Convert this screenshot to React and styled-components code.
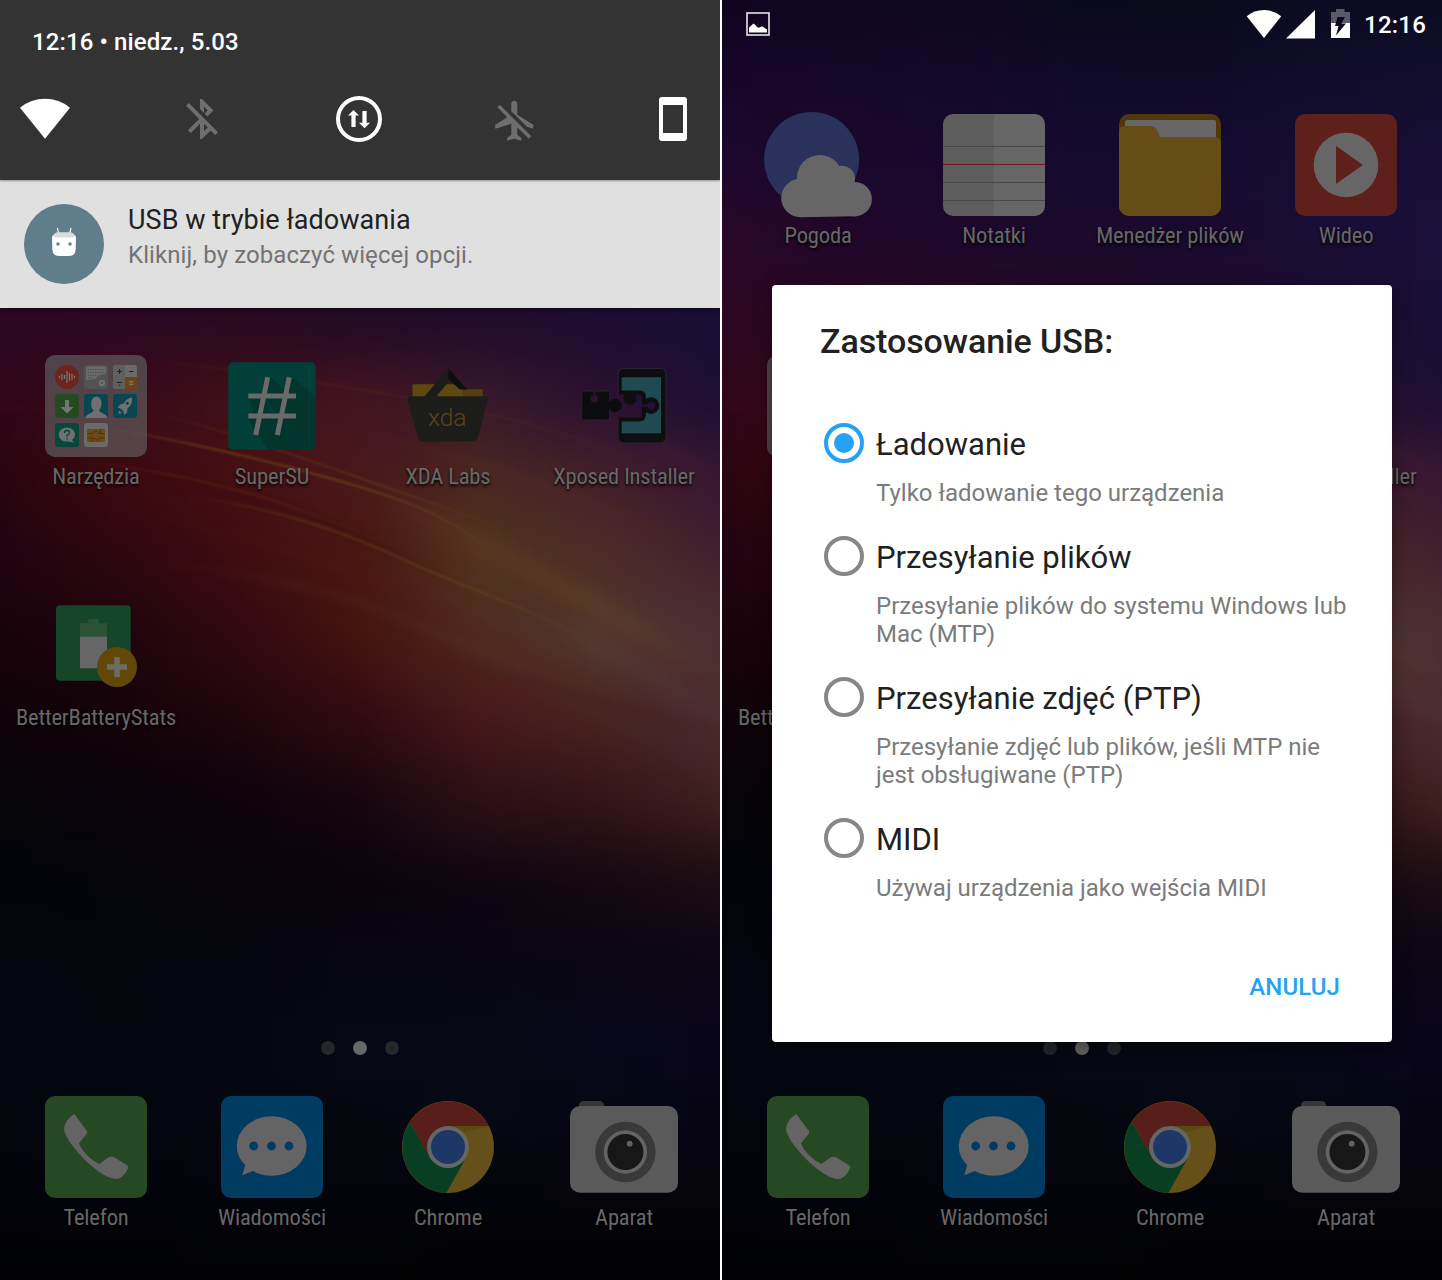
import React from 'react';
import styled, { createGlobalStyle } from 'styled-components';

const GlobalStyle = createGlobalStyle`
  body { margin: 0; background: #fff; font-family: Roboto, "Noto Sans", sans-serif; }
  svg { display: block; flex: none; }
`;

/* ---------- wallpaper ---------- */

const ROWS = [
  '110420 100620 0d0820 0a091a 0a0a1a 0b0b20 0c0b22',
  '170528 150728 130828 0f0a28 0f0a26 100c2a 110d2c',
  '1c072e 1a082d 18082e 150a30 140b30 160e34 170e36',
  '2a0726 20072a 1e082c 1b0a2c 1a0a2c 190d35 1a0f38',
  '2b0722 2b0822 28091f 220a24 200b2a 1c0c30 180e36',
  '300619 380a1a 420f18 431420 38182a 2a1030 1c0e34',
  '28040f 3c090f 460f12 4a181a 4a2820 44202a 381630',
  '200310 2c060f 400c10 4a1612 52341f 4f2c26 44202e',
  '180309 1e040c 300810 44130f 4e2a20 533830 4c3034',
  '0e0309 140309 1f050c 300a10 46181a 482420 4a2a30',
  '050409 08030a 0e030c 16050e 2c1015 341418 40201f',
  '02040a 04040a 08040b 0a040e 0e0510 140810 1c0c12',
  '03060e 03050d 05050f 070612 080612 0a0614 0c0616',
  '030610 04060f 040710 060816 060816 08071a 09051a',
  '03050d 03060f 04070f 05070f 060812 060714 070514',
  '020309 02030a 03040a 03040a 030409 040409 040409',
  '010102 010103 020203 020203 010102 010102 010102',
].map((r) => r.split(' '));

const STREAKS = [
  { d: 'M147 412 C200 422 280 450 360 478 S470 515 520 537', c: '#6b4a14', w: 1.6, o: 0.6, b: 'f', fade: true },
  { d: 'M90 425 C180 440 270 460 360 487 S460 530 510 562', c: '#7a5a16', w: 1.8, o: 0.75, b: 'f', fade: true },
  { d: 'M180 495 C260 505 330 525 400 558 S540 610 620 656', c: '#6e4c1c', w: 2.4, o: 0.55, b: 'f', fade: true },
  { d: 'M120 560 C240 570 330 588 400 618 S600 695 720 735', c: '#5f3422', w: 4, o: 0.45, b: 'm', fade: true },
  { d: 'M60 460 C150 466 240 488 300 510 S380 540 440 565', c: '#6b2c14', w: 1.8, o: 0.5, b: 'f', fade: true },
  { d: 'M100 355 C200 365 300 378 420 400 S600 445 700 480', c: '#5a2c1c', w: 2.4, o: 0.4, b: 'f', fade: true },
  { d: 'M330 430 C430 445 560 480 720 560', c: '#5c3020', w: 6, o: 0.35, b: 'm', fade: true },
  { d: 'M0 405 C140 420 300 460 420 520 S620 640 720 690', c: '#661818', w: 4, o: 0.22, b: 'm' },
  { d: 'M60 500 C200 520 340 560 460 620 S660 710 720 760', c: '#5c1c12', w: 5, o: 0.3, b: 'm', fade: true },
  { d: 'M200 590 C360 610 500 680 720 800', c: '#54160f', w: 8, o: 0.25, b: 'm', fade: true },
  { d: 'M360 490 C460 530 580 595 740 690', c: '#6a4c26', w: 20, o: 0.4, b: 'l', fade: true },
  { d: 'M520 605 C590 640 660 680 760 735', c: '#65483e', w: 12, o: 0.35, b: 'l' , fade: true },
  { d: 'M440 660 C560 690 640 710 740 740', c: '#3c1414', w: 6, o: 0.3, b: 'm', fade: true },
  { d: 'M560 400 C620 425 680 455 740 485', c: '#4a1c3c', w: 10, o: 0.3, b: 'm', fade: true },
  { d: 'M360 730 C480 730 620 770 720 840', c: '#40120f', w: 16, o: 0.3, b: 'l', fade: true },
  { d: 'M150 480 C300 500 400 550 480 600', c: '#240508', w: 6, o: 0.3, b: 'm', fade: true },
];

const WallpaperSvg = styled.svg`
  position: absolute;
  inset: 0;
`;

const Wallpaper = ({ id }) => (
  <WallpaperSvg width="720" height="1280" viewBox="0 0 720 1280">
    <defs>
      {ROWS.map((stops, i) => (
        <linearGradient id={`${id}-r${i}`} key={i} gradientUnits="userSpaceOnUse" x1="0" x2="720" y1="0" y2="0">
          {stops.map((c, j) => (
            <stop key={j} offset={j / 6} stopColor={`#${c}`} />
          ))}
        </linearGradient>
      ))}
      {STREAKS.map((s, i) => s.fade && (
        <linearGradient id={`${id}-s${i}`} key={i}>
          <stop offset="0" stopColor={s.c} stopOpacity="0" />
          <stop offset=".3" stopColor={s.c} stopOpacity=".8" />
          <stop offset=".6" stopColor={s.c} />
          <stop offset="1" stopColor={s.c} stopOpacity="0" />
        </linearGradient>
      ))}
      <filter id={`${id}-mesh`} filterUnits="userSpaceOnUse" x="-100" y="-100" width="920" height="1480" colorInterpolationFilters="sRGB">
        <feGaussianBlur stdDeviation="6 30" />
      </filter>
      {[['f', 0.8], ['m', 4], ['l', 10]].map(([k, s]) => (
        <filter key={k} id={`${id}-${k}`} filterUnits="userSpaceOnUse" x="0" y="250" width="720" height="700" colorInterpolationFilters="sRGB">
          <feGaussianBlur stdDeviation={s} />
        </filter>
      ))}
    </defs>
    <g filter={`url(#${id}-mesh)`}>
      {ROWS.map((_, i) => (
        <rect
          key={i}
          x="-100"
          width="920"
          y={i === 0 ? -140 : i * 80 - 40}
          height={i === 0 || i === 16 ? 180 : 80.5}
          fill={`url(#${id}-r${i})`}
        />
      ))}
    </g>
    {STREAKS.map((s, i) => (
      <path
        key={i}
        d={s.d}
        fill="none"
        stroke={s.fade ? `url(#${id}-s${i})` : s.c}
        strokeWidth={s.w}
        opacity={s.o}
        filter={`url(#${id}-${s.b})`}
      />
    ))}
  </WallpaperSvg>
);

/* ---------- launcher icons, drawn in a 108 x 108 box ---------- */

const IconBox = ({ children }) => (
  <svg width="108" height="108" viewBox="0 0 108 108">{children}</svg>
);

const Weather = () => (
  <IconBox>
    <circle cx="47.6" cy="48.5" r="47.5" fill="#2a325c" />
    <g fill="#666">
      <circle cx="55.7" cy="66.6" r="22.7" />
      <circle cx="78" cy="67.7" r="13" />
      <circle cx="36.4" cy="87" r="19.2" />
      <circle cx="90.7" cy="88.2" r="17.2" />
      <path d="M34 70 L80 62 L91 72 V105.3 L37 106.2 Z" />
    </g>
  </IconBox>
);

const Notes = () => (
  <IconBox>
    <path d="M13 3H54V105H13A10 10 0 0 1 3 95V13A10 10 0 0 1 13 3Z" fill="#5e5e5e" />
    <path d="M54 3H95A10 10 0 0 1 105 13V95A10 10 0 0 1 95 105H54Z" fill="#666" />
    <path d="M3 35.5H105M3 71.5H105M3 89.5H105" stroke="#484848" />
    <path d="M3 53.5H105" stroke="#6c1a22" />
  </IconBox>
);

const Files = () => (
  <IconBox>
    <rect x="3" y="3" width="102" height="102" rx="10" fill="#503909" />
    <rect x="9" y="9" width="91" height="30" rx="2" fill="#666" />
    <path d="M3 21Q3 15 9 15H33Q39 15 41 19L44 26H98Q105 26 105 33V95A10 10 0 0 1 95 105H13A10 10 0 0 1 3 95Z" fill="#664d17" />
  </IconBox>
);

const Video = () => (
  <IconBox>
    <rect x="3" y="3" width="102" height="102" rx="10" fill="#5e201b" />
    <circle cx="54" cy="54" r="32.3" fill="#666" />
    <path d="M44 34.7L70.8 54L44 73Z" fill="#5e201b" />
  </IconBox>
);

const Tools = () => (
  <IconBox>
    <rect x="3" y="3" width="102" height="102" rx="10" fill="rgba(102,102,102,.62)" />
    <circle cx="25" cy="25" r="12" fill="#6b241e" />
    <path d="M17.5 23.8V26.2M20 22V28M22.5 23V27M25 19V31M27.5 21V29M30 22V28M32.5 23.8V26.2" stroke="#777" strokeWidth="1.2" />
    <rect x="42" y="13" width="24" height="24" rx="3" fill="#535353" />
    <path d="M44 17Q44 14.5 46.5 14.5H62Q64 14.5 64 17V22Q57 22 54 26Q52 28 44 28Z" fill="#6a6a6a" />
    <path d="M46 17.5H63M46 20.5H63M46 23.5H55M46 26H51" stroke="#4b4b4b" strokeWidth="1" strokeDasharray="1.2 1.2" />
    <circle cx="60" cy="31" r="3.2" fill="#707070" />
    <circle cx="60" cy="31" r=".8" fill="#6b241e" />
    <rect x="71" y="13" width="24" height="24" rx="3" fill="#6a6a6a" />
    <path d="M74 13H83V37H74A3 3 0 0 1 71 34V16A3 3 0 0 1 74 13Z" fill="#5f5f5f" />
    <path d="M83 25H95V34A3 3 0 0 1 92 37H83Z" fill="#6b4514" />
    <path d="M75 19.5H80M77.5 17V22M87 19.5H91.5M75 30.5H80" stroke="#222" strokeWidth="1.1" />
    <path d="M77.5 32.5V33.8" stroke="#222" strokeWidth="1.2" />
    <path d="M87 29.8H91.5M87 32.2H91.5" stroke="#888" strokeWidth="1" />
    <rect x="13" y="42" width="24" height="24" rx="3" fill="#254a22" />
    <path d="M23 48H27V55H31.5L25 61.5L18.5 55H23Z" fill="#747474" />
    <rect x="42" y="42" width="24" height="24" rx="3" fill="#084652" />
    <path d="M43 66C44 62 51 61 51.5 58.5C48 55 48 45 54.5 44.5C61 45 60.5 55 57 58.5C58 61 65 62 65.5 66Z" fill="#6f6f6f" />
    <rect x="71" y="42" width="24" height="24" rx="3" fill="#084652" />
    <path d="M90 45.5Q91 52 85.5 56.5L85 60.5L82 63L81.5 59L78.5 56.5L75.5 55.5L78 52.5L81.5 51.5Q85 46 90 45.5ZM77 58.5L80 61L76.5 62Z" fill="#707070" />
    <circle cx="85.3" cy="51.3" r="1.5" fill="#084652" />
    <rect x="13" y="71" width="24" height="24" rx="3" fill="#06493b" />
    <path d="M25 75.5C29.5 75.5 33 78.6 33 82.5C33 85 31.5 87 30 88L32 90.5L27 89.4C21 90.5 16.8 87 16.8 82.5C16.8 78.6 20.5 75.5 25 75.5Z" fill="#6f6f6f" />
    <path d="M22.5 81Q22.5 78.5 25 78.5Q27.5 78.5 27.5 80.7Q27.5 82.2 25 83.5V85M25 86V87.5" fill="none" stroke="#06493b" strokeWidth="1.3" />
    <rect x="42" y="71" width="24" height="24" rx="3" fill="#6c6a68" />
    <rect x="45" y="77" width="18" height="13" rx="1.5" fill="#6b4a14" />
    <path d="M45 81.5H51L53 79.5H55L57 81.5H63M45 86H52L54 88H56L57 86H63M50 86V90M58.5 77V81.5" fill="none" stroke="#473009" strokeWidth=".8" />
  </IconBox>
);

const SuperSU = () => (
  <IconBox>
    <rect x="10.2" y="10.2" width="87.6" height="87.6" rx="5" fill="#013f38" />
    <path d="M53 25L71 43L60 64L44 41ZM74 25L97.5 45V92.5Q97.5 97.5 92.5 97.5H50L30 68L38 65L30 44L46 46L56 64L62 45Z" fill="#013029" opacity=".65" />
    <path d="M30.3 44H78M30.3 64H78M49.7 25.3L37.7 83M71.3 25.3L59.3 83" stroke="#6a6a6a" strokeWidth="5" />
  </IconBox>
);

const XdaText = styled.text`
  font: 300 24px Roboto, sans-serif;
  fill: #5c4414;
`;

const XdaLabs = () => (
  <IconBox>
    <rect x="18.5" y="32.3" width="50.5" height="14" rx="1" fill="#5f4810" />
    <rect x="69" y="37.3" width="19.7" height="9" rx="1" fill="#523e10" />
    <path d="M54.3 16.3L73 37.5H66L54 27Z" fill="#0e0e0e" />
    <path d="M54.3 16.3V30L42 45H30Z" fill="#1b1b1b" />
    <path d="M13.7 48Q13.3 44.3 17 44.3H90.5Q94.5 44.3 93.7 48L84.5 84Q83 89.5 78 89.5H30Q25 89.5 23.5 84Z" fill="#1c1c1b" />
    <XdaText x="34" y="74" textLength="38.5" lengthAdjust="spacingAndGlyphs">xda</XdaText>
  </IconBox>
);

const Xposed = () => {
  const id = React.useId();
  return (
    <IconBox>
      <mask id={id} maskUnits="userSpaceOnUse" x="0" y="0" width="108" height="108">
        <rect width="108" height="108" fill="#fff" />
        <path d="M44 42.4H69Q72 42.4 72 45V52.4H77.500A4 4 0 1 1 77.500 54.800H72V62Q72 65.600 69 65.600H44Z" fill="#000" />
        <circle cx="60" cy="46" r="6.7" fill="#fff" />
        <rect x="55" y="38" width="10" height="6" fill="#fff" />
        <circle cx="24.3" cy="46.8" r="3.7" fill="#000" />
        <path d="M24.3 37V46" stroke="#000" strokeWidth="2" />
      </mask>
      <g mask={`url(#${id})`}>
        <rect x="48" y="16.5" width="48" height="74.5" rx="5" fill="#0e0e10" stroke="#2a2430" strokeWidth="1.2" />
        <rect x="51.7" y="25.3" width="39.3" height="56" fill="#204a52" />
        <path d="M50 40.5H69Q74 40.5 74 45V62Q74 67.5 69 67.5H50" fill="#0e0e10" stroke="#0e0e10" strokeWidth="3.8" />
        <circle cx="81" cy="53.6" r="8.3" fill="#0e0e10" />
        <rect x="11.7" y="39" width="28" height="29" rx="2" fill="#0c0c0e" stroke="#2a2430" strokeWidth="1" />
      </g>
      <circle cx="45" cy="53.3" r="6.6" fill="#0c0c0e" />
      <path d="M38 53.3H47" stroke="#0c0c0e" strokeWidth="6" />
    </IconBox>
  );
};

const BatteryStats = () => (
  <IconBox>
    <rect x="14" y="12.3" width="74.7" height="75.5" rx="4" fill="#16462a" />
    <path d="M46.3 26H56.7V30.3H65V44H38V30.3H46.3Z" fill="#2c5235" />
    <rect x="38" y="43.7" width="27" height="31.6" fill="#666" />
    <circle cx="75" cy="74" r="20" fill="#624808" />
    <path d="M65 74H85M75 64V84" stroke="#6e6b62" strokeWidth="5.6" />
  </IconBox>
);

const Phone = () => (
  <IconBox>
    <rect x="3" y="3" width="102" height="102" rx="10" fill="#264924" />
    <path d="M32.3 21L45 38.3Q45.6 39.5 44.6 41L37 50.3Q40 58 46.5 63.5Q52 69 57.5 71L65.5 65Q69.5 62.8 72.5 64.5L85 72.3Q86.8 73.5 85.5 76.5Q81 85.5 74.5 86Q63 86 43 67Q22 45.5 22 35Q23.5 26.5 32.3 21Z" fill="#646464" />
  </IconBox>
);

const Messages = () => (
  <IconBox>
    <rect x="3" y="3" width="102" height="102" rx="10" fill="#003b62" />
    <ellipse cx="53.7" cy="53" rx="35" ry="29.7" fill="#646464" />
    <path d="M27.7 70L24.3 82.3L36 77.5Z" fill="#646464" />
    <g fill="#003b62">
      <circle cx="35.7" cy="53" r="4.4" />
      <circle cx="53.5" cy="53" r="4.4" />
      <circle cx="71" cy="53" r="4.4" />
    </g>
  </IconBox>
);

const Chrome = () => (
  <IconBox>
    <circle cx="54" cy="54" r="46" fill="#65501a" />
    <path d="M54 33H94.7L70 39Z" fill="#55420f" opacity=".6" />
    <path d="M15.8 29A46 46 0 0 0 52.3 100L72.2 64.5L54 54L36 64Z" fill="#083f23" />
    <path d="M15.8 29A46 46 0 0 1 94.7 33H54V54L36 64Z" fill="#571e1a" />
    <circle cx="54" cy="54" r="21" fill="#666" />
    <circle cx="54" cy="54" r="17" fill="#1d3867" />
  </IconBox>
);

const Camera = () => (
  <IconBox>
    <path d="M9 15V13Q9 8 14 8H29Q34 8 34 13V15Z" fill="#343637" />
    <rect x="0" y="13" width="108" height="86.7" rx="10" fill="#5a5a5a" />
    <circle cx="55.4" cy="59" r="30.2" fill="#37393a" />
    <circle cx="55.4" cy="59" r="21.7" fill="#636363" />
    <circle cx="55.4" cy="59" r="18" fill="#171717" />
    <circle cx="59.7" cy="50.7" r="2.9" fill="#626262" />
  </IconBox>
);

/* ---------- home screen ---------- */

const Page = styled.main`
  display: flex;
  gap: 2px;
  width: 1442px;
  height: 1280px;
  overflow: hidden;
  background: #fff;
`;

const PhoneScreen = styled.section`
  position: relative;
  width: 720px;
  height: 1280px;
  overflow: hidden;
  background: #05060c;
`;

const Home = styled.div`
  position: relative;
  padding: 111px 8px 0;
  display: flex;
  flex-direction: column;
`;

const AppGrid = styled.div`
  display: grid;
  grid-template-columns: repeat(4, 176px);
  grid-auto-rows: ${(p) => p.$row}px;
`;

const AppCell = styled.div`
  display: flex;
  flex-direction: column;
  align-items: center;
`;

const AppLabel = styled.span`
  margin-top: 3px;
  font-size: 22.5px;
  line-height: 26px;
  font-weight: 450;
  font-stretch: 75%;
  letter-spacing: -0.15px;
  white-space: nowrap;
  color: #686868;
  text-shadow: 0 2px 3px #000;
`;

const Dots = styled.div`
  display: flex;
  justify-content: center;
  gap: 18px;
  margin: 207px 0 38px;
`;

const Dot = styled.i`
  width: 14px;
  height: 14px;
  border-radius: 50%;
  background: ${(p) => (p.$active ? '#676767' : '#26272d')};
`;

const APPS = [
  ['Pogoda', Weather],
  ['Notatki', Notes],
  ['Menedżer plików', Files],
  ['Wideo', Video],
  ['Narzędzia', Tools],
  ['SuperSU', SuperSU],
  ['XDA Labs', XdaLabs],
  ['Xposed Installer', Xposed],
  ['BetterBatteryStats', BatteryStats],
];

const DOCK = [
  ['Telefon', Phone],
  ['Wiadomości', Messages],
  ['Chrome', Chrome],
  ['Aparat', Camera],
];

const AppItem = ({ name, Icon, unlabeled }) => (
  <AppCell>
    <Icon />
    {!unlabeled && <AppLabel>{name}</AppLabel>}
  </AppCell>
);

/* Labels that sit fully under a panel are not rendered. */
const HomeScreen = ({ covered = [] }) => (
  <Home>
    <AppGrid $row={241}>
      {APPS.map(([name, Icon]) => (
        <AppItem key={name} name={name} Icon={Icon} unlabeled={covered.includes(name)} />
      ))}
    </AppGrid>
    <Dots>
      <Dot />
      <Dot $active />
      <Dot />
    </Dots>
    <AppGrid $row={150}>
      {DOCK.map(([name, Icon]) => <AppItem key={name} name={name} Icon={Icon} />)}
    </AppGrid>
  </Home>
);

/* ---------- notification shade ---------- */

const Shade = styled.div`
  position: absolute;
  inset: 0 0 auto 0;
  box-shadow: 0 1px 6px rgba(0, 0, 0, 0.5);
`;

const ShadeHeader = styled.header`
  position: relative;
  box-sizing: border-box;
  height: 180px;
  padding: 26px 22px 0 20px;
  background: #333;
  box-shadow: 0 1px 2px rgba(0, 0, 0, 0.35);
`;

const ShadeDate = styled.div`
  padding-left: 12px;
  height: 32px;
  line-height: 32px;
  font-size: 24px;
  font-weight: 500;
  letter-spacing: 0.1px;
  color: #fff;
`;

const QuickTiles = styled.div`
  display: flex;
  justify-content: space-between;
  margin-top: 36px;
`;

const Notification = styled.article`
  box-sizing: border-box;
  display: flex;
  gap: 24px;
  height: 128px;
  padding: 24px;
  background: #e0e0e0;
`;

const NotificationTitle = styled.div`
  margin-top: -1px;
  font-size: 27px;
  line-height: 34px;
  letter-spacing: 0.05px;
  color: #212121;
`;

const NotificationText = styled.div`
  margin-top: 2px;
  font-size: 24px;
  line-height: 32px;
  letter-spacing: 0.09px;
  color: #737373;
`;

const Tile = ({ children }) => (
  <svg width="50" height="50" viewBox="0 0 50 50">{children}</svg>
);

const NotificationShade = () => (
  <Shade>
    <ShadeHeader>
      <ShadeDate>12:16 • niedz., 5.03</ShadeDate>
      <QuickTiles>
        <Tile><path d="M0 13.7A39.5 39.5 0 0 1 50 13.7L25 44.8Z" fill="#fff" /></Tile>
        <Tile>
          <path transform="translate(1 1) scale(2)" fill="#6e6e6e" d="M13 5.83l1.88 1.88-1.6 1.6 1.41 1.41 3.02-3.02L12 2h-1v5.03l2 2v-3.2zM5.41 4L4 5.41 10.59 12 5 17.59 6.41 19 11 14.41V22h1l4.29-4.29 2.3 2.29L20 18.59 5.41 4zM13 18.17v-3.76l1.88 1.88L13 18.17z" />
        </Tile>
        <Tile>
          <circle cx="25" cy="25" r="21" fill="none" stroke="#fff" strokeWidth="4" />
          <path d="M19.5 16L25 21.5H21.6V33H17.4V21.5H14ZM30.5 34.3L25 28.8H28.4V17H32.6V28.8H36Z" fill="#fff" />
        </Tile>
        <Tile>
          <path transform="translate(.3 2.8) scale(2)" fill="#6e6e6e" d="M13 9V3.5c0-.83-.67-1.5-1.5-1.5S10 2.67 10 3.5v3.68l7.83 7.83L21 16v-2l-8-5zM3 5.27l4.99 4.99L2 14v2l8-2.5V19l-2 1.5V22l3.5-1 3.5 1v-1.5L13 19v-3.73L18.73 21 20 19.73 4.27 4 3 5.27z" />
        </Tile>
        <Tile>
          <path fillRule="evenodd" d="M14 3H36Q39 3 39 6V44Q39 47 36 47H14Q11 47 11 44V6Q11 3 14 3ZM15 11V39H35V11Z" fill="#fff" />
        </Tile>
      </QuickTiles>
    </ShadeHeader>
    <Notification>
      <svg width="80" height="80" viewBox="0 0 80 80">
        <circle cx="40" cy="40" r="40" fill="#607d8b" />
        <path d="M33.5 24L34.6 30M47 24L45.6 30" stroke="#fff" strokeWidth="1.2" />
        <path d="M28 34Q28 30.5 32 30H48Q52 30.5 52 34L51.6 46Q51 52 45 52H35Q29 52 28.4 46Z" fill="#fff" />
        <path d="M29 33Q30 28.3 34 28.3H46Q50 28.3 51 33Q40 34 29 33Z" fill="#d5dde0" />
        <circle cx="34" cy="40" r="1.7" fill="#607d8b" />
        <circle cx="46" cy="40" r="1.7" fill="#607d8b" />
      </svg>
      <div>
        <NotificationTitle>USB w trybie ładowania</NotificationTitle>
        <NotificationText>Kliknij, by zobaczyć więcej opcji.</NotificationText>
      </div>
    </Notification>
  </Shade>
);

/* ---------- status bar and USB dialog ---------- */

const StatusBar = styled.div`
  position: absolute;
  inset: 0 0 auto 0;
  display: flex;
  align-items: center;
  height: 48px;
  padding: 0 16px 0 24px;
`;

const StatusIcons = styled.div`
  display: flex;
  align-items: center;
  margin-left: auto;
`;

const Clock = styled.span`
  margin-left: 14px;
  font-size: 24px;
  line-height: 28px;
  padding-top: 2px;
  font-weight: 500;
  letter-spacing: 0.2px;
  color: #fff;
`;

const Dialog = styled.div`
  position: absolute;
  inset: 285px 50px auto 50px;
  box-sizing: border-box;
  height: 757px;
  padding: 34px 40px 0 48px;
  border-radius: 4px;
  background: #fff;
  box-shadow: 0 6px 20px rgba(0, 0, 0, 0.4);
`;

const DialogTitle = styled.h1`
  margin: 0 0 59px;
  font-size: 34px;
  line-height: 45px;
  font-weight: 500;
  letter-spacing: -0.08px;
  color: #212121;
`;

const Options = styled.div`
  display: flex;
  flex-direction: column;
  gap: 29px;
`;

const Option = styled.label`
  display: grid;
  grid-template-columns: 40px 1fr;
  grid-template-rows: 40px auto;
  column-gap: 12px;
  row-gap: 16px;
  padding-left: 4px;
`;

const RadioRing = styled.span`
  box-sizing: border-box;
  width: 40px;
  height: 40px;
  padding: 6px;
  border: 4px solid ${(p) => (p.$on ? '#26a2f5' : '#878787')};
  border-radius: 50%;
`;

const RadioFill = styled.span`
  display: block;
  width: 20px;
  height: 20px;
  border-radius: 50%;
  background: ${(p) => (p.$on ? '#26a2f5' : 'transparent')};
`;

const OptionName = styled.span`
  padding-top: 2px;
  font-size: 31px;
  line-height: 40px;
  color: #212121;
`;

const OptionText = styled.span`
  grid-column: 2;
  font-size: 24px;
  line-height: 28px;
  color: #7b7b7b;
`;

const Actions = styled.div`
  display: flex;
  justify-content: flex-end;
  margin-top: 71px;
  padding-right: 12px;
`;

const Cancel = styled.button`
  padding: 0;
  border: 0;
  background: none;
  font: 500 24px/28px Roboto, sans-serif;
  letter-spacing: 0.1px;
  color: #26a2f5;
`;

const OPTIONS = [
  { name: 'Ładowanie', lines: ['Tylko ładowanie tego urządzenia'], on: true },
  { name: 'Przesyłanie plików', lines: ['Przesyłanie plików do systemu Windows lub', 'Mac (MTP)'] },
  { name: 'Przesyłanie zdjęć (PTP)', lines: ['Przesyłanie zdjęć lub plików, jeśli MTP nie', 'jest obsługiwane (PTP)'] },
  { name: 'MIDI', lines: ['Używaj urządzenia jako wejścia MIDI'] },
];

const UsbDialog = () => (
  <Dialog>
    <DialogTitle>Zastosowanie USB:</DialogTitle>
    <Options>
      {OPTIONS.map((o) => (
        <Option key={o.name}>
          <RadioRing $on={o.on}>
            <RadioFill $on={o.on} />
          </RadioRing>
          <OptionName>{o.name}</OptionName>
          <OptionText>
            {o.lines.map((line, i) => (
              <React.Fragment key={line}>
                {i > 0 && <br />}
                {line}
              </React.Fragment>
            ))}
          </OptionText>
        </Option>
      ))}
    </Options>
    <Actions>
      <Cancel>ANULUJ</Cancel>
    </Actions>
  </Dialog>
);

const PhoneStatus = () => (
  <StatusBar>
    <svg width="24" height="24" viewBox="0 0 24 24">
      <rect x="1" y="1" width="22" height="22" fill="none" stroke="#e8e6ea" strokeWidth="1.6" />
      <path d="M3 20.5V15.5Q5 14 7.5 11.5Q9.5 12.5 11 15L13 15.8L16 14.3L18 15.5L21 17.5V20.5Z" fill="#fff" />
    </svg>
    <StatusIcons>
      <svg width="104" height="30" viewBox="0 0 104 30">
        <path d="M.7 7.2A27.3 27.3 0 0 1 35.2 7.2L18 29Z" fill="#fff" />
        <path d="M40 29.5L69 1V29.5Z" fill="#fff" />
        <path d="M90 0H98.5V3H104V14H85V3H90Z" fill="#fff" opacity=".32" />
        <path d="M85 14H104V29H85Z" fill="#fff" />
        <path d="M91.5 8H99L95.5 14.5H100L90 26.5L92.5 17H89Z" fill="#0c0920" />
      </svg>
      <Clock>12:16</Clock>
    </StatusIcons>
  </StatusBar>
);

export default function App() {
  return (
    <>
      <GlobalStyle />
      <Page>
        <PhoneScreen>
          <Wallpaper id="left" />
          <HomeScreen covered={['Pogoda', 'Notatki', 'Menedżer plików', 'Wideo']} />
          <NotificationShade />
        </PhoneScreen>
        <PhoneScreen>
          <Wallpaper id="right" />
          <HomeScreen covered={['Narzędzia', 'SuperSU', 'XDA Labs']} />
          <PhoneStatus />
          <UsbDialog />
        </PhoneScreen>
      </Page>
    </>
  );
}
